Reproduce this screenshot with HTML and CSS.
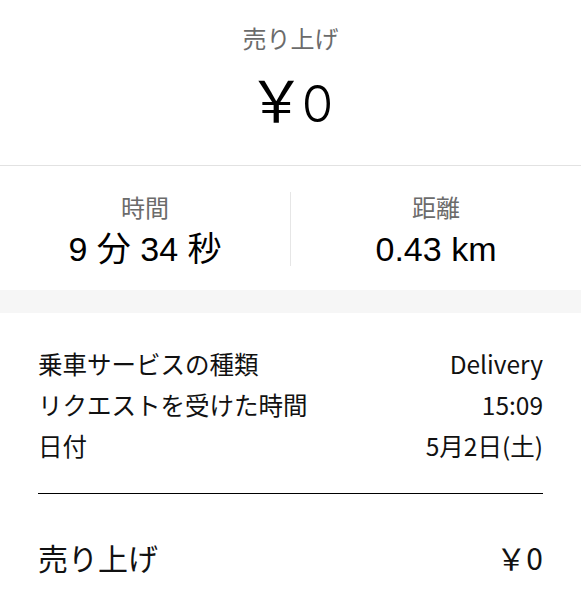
FILE: index.html
```html
<!DOCTYPE html>
<html lang="ja">
<head>
    <meta charset="UTF-8">
    <meta name="viewport" content="width=device-width, initial-scale=1.0">
    <title>売り上げ</title>
    <link rel="stylesheet" href="styles.css">
</head>
<body>
    <div class="earnings">
        <div class="label">売り上げ</div>
        <div class="amount"><span class="yen">￥</span><span class="digit">0</span></div>
    </div>

    <div class="stats">
        <div class="stat">
            <div class="label">時間</div>
            <div class="value">9 分 34 秒</div>
        </div>
        <div class="stat">
            <div class="label">距離</div>
            <div class="value">0.43 km</div>
        </div>
    </div>

    <div class="band"></div>

    <div class="details">
        <table>
            <tr>
                <td>乗車サービスの種類</td>
                <td class="right">Delivery</td>
            </tr>
            <tr>
                <td>リクエストを受けた時間</td>
                <td class="right">15:09</td>
            </tr>
            <tr>
                <td>日付</td>
                <td class="right">5月2日(土)</td>
            </tr>
        </table>
        <div class="total">
            <span>売り上げ</span>
            <span class="total-amount">￥0</span>
        </div>
    </div>
</body>
</html>
```

FILE: styles.css
```css
body {
    margin: 0;
    background: #fff;
    color: #111;
    font-family: "Noto Sans CJK JP", sans-serif;
}
.label {
    color: #6b6b6b;
    font-size: 24px;
    line-height: 30px;
}
.earnings {
    text-align: center;
    padding: 23px 0 38px;
    border-bottom: 1px solid #e2e2e2;
}
.amount {
    height: 60px;
    font-size: 57px;
    line-height: 60px;
    margin-top: 14px;
    color: #000;
}
.digit {
    font-family: "Inter", "Liberation Sans", sans-serif;
    font-weight: 300;
    font-size: 51px;
    line-height: 60px;
    margin-left: -3px;
}
.stats {
    display: flex;
    padding: 26px 0 24px;
}
.stat {
    flex: 1;
    text-align: center;
}
.stat + .stat {
    border-left: 1px solid #e6e6e6;
}
.value {
    font-family: "Liberation Sans", "Noto Sans CJK JP", sans-serif;
    font-size: 34px;
    line-height: 44px;
    margin-top: 5px;
    margin-bottom: -5px;
    color: #000;
}
.band {
    height: 23px;
    background: #f6f6f6;
}
.details {
    padding: 30px 38px 0;
}
table {
    width: 100%;
    border-collapse: collapse;
    font-size: 24.5px;
    line-height: 41px;
}
td {
    padding: 0;
}
.right {
    text-align: right;
}
.total {
    display: flex;
    justify-content: space-between;
    border-top: 1.5px solid #000;
    margin-top: 27px;
    padding-top: 43px;
    font-size: 30px;
    line-height: 40px;
}
```
